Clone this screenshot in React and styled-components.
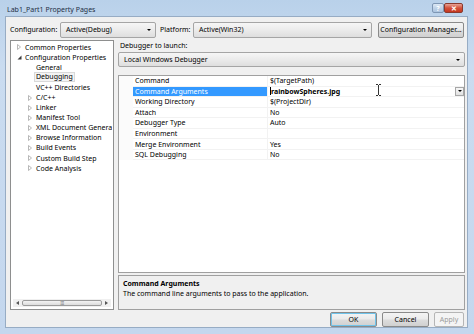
import React from 'react'
import styled, { createGlobalStyle } from 'styled-components'

const Global = createGlobalStyle`
  html, body { margin: 0; padding: 0; }
  body {
    width: 474px; height: 334px; overflow: hidden;
    font-family: "Segoe UI", "Noto Sans", "Open Sans", sans-serif;
    font-size: 7px; color: #000;
  }
`

const Frame = styled.div`
  width: 474px; height: 334px; box-sizing: border-box;
  display: flex; flex-direction: column;
  padding: 0 6px 6px 5px;
  background: linear-gradient(180deg, #b9d1ea 0%, #cadcf0 20%, #c4d7ee 100%);
`

const TitleBar = styled.div`
  flex: none; height: 16px; display: flex; align-items: center; justify-content: space-between;
  padding-left: 2px; padding-top: 2px; box-sizing: border-box;
  color: #1e2f45;
`

const TitleControls = styled.div`
  display: flex; align-self: flex-start; margin-top: 1px; margin-right: 5px;
`

const CaptionBtn = styled.div`
  width: ${p => p.$w}px; height: 10px; box-sizing: border-box;
  border: 1px solid ${p => p.$close ? '#8a3a2e' : '#7f97b4'};
  border-radius: 2px;
  background: ${p => p.$close
    ? 'linear-gradient(#e7a497, #d4513b 50%, #c4361f)'
    : 'linear-gradient(#dce8f5, #bfd2e8 50%, #adc4df)'};
  display: flex; align-items: center; justify-content: center;
  color: #fff; font-size: 7px; font-weight: bold; line-height: 1;
`

const Client = styled.div`
  flex: none; height: 312px; box-sizing: border-box;
  background: #f0f0f0; border: 1px solid #97acc4;
  display: flex; flex-direction: column;
  padding: 4px 2px 0 4px;
`

const TopRow = styled.div`
  flex: none; display: flex; align-items: center; height: 17px;
`

const Label = styled.span`
  width: ${p => p.$w}px; margin-left: ${p => p.$ml || 0}px; white-space: nowrap;
`

const Combo = styled.div`
  flex: none; width: ${p => p.$w ? `${p.$w}px` : 'auto'}; height: ${p => p.$h || 16}px; box-sizing: border-box;
  border: 1px solid #a5a5a5; border-radius: 2px;
  background: linear-gradient(#f6f6f6, #ebebeb 50%, #dedede);
  display: flex; align-items: center; justify-content: space-between;
  padding: 0 4px 0 5px;
  margin-left: ${p => p.$ml || 0}px;
  margin-top: ${p => p.$mt || 0}px;
`

const Arrow = styled.span`
  width: 0; height: 0;
  border-left: 2px solid transparent; border-right: 2px solid transparent;
  border-top: 2px solid #000;
`

const Button = styled.div`
  flex: none; width: ${p => p.$w}px; height: ${p => p.$h || 16}px; box-sizing: border-box;
  border: 1px solid #8a8a8a; border-radius: 2px;
  background: linear-gradient(#f4f4f4, #ebebeb 45%, #dcdcdc 55%, #d0d0d0);
  display: flex; align-items: center; justify-content: center;
  margin-left: ${p => p.$ml || 0}px;
  color: ${p => p.$disabled ? '#9a9a9a' : '#000'};
  ${p => p.$disabled && 'border-color: #b5b5b5; background: #f4f4f4;'}
  ${p => p.$default && 'box-shadow: inset 0 0 0 1px #6fc3ea;'}
`

const Main = styled.div`
  flex: none; display: flex; margin-top: 2px; gap: 4px;
`

const Tree = styled.div`
  flex: none; width: 104px; height: 270px; box-sizing: border-box;
  background: #fff; border: 1px solid #8e8f8f;
  display: flex; flex-direction: column;
  padding: 1px 1px 2px 1px;
`

const TreeList = styled.div`
  flex: 1; overflow: hidden;
`

const TreeItem = styled.div`
  height: 10.1px; display: flex; align-items: center; white-space: nowrap;
  padding-left: ${p => p.$level * 11 + 5}px;
`

const Expander = styled.span`
  flex: none; width: 8px; display: inline-flex; justify-content: flex-start; align-items: center;
`

const ItemText = styled.span`
  flex: none;
  ${p => p.$selected && `
    border: 1px solid #d9d9d9; background: #f4f4f4; margin-left: -2px; padding: 0 1px; line-height: 8px;
  `}
`

const HScroll = styled.div`
  flex: none; height: 8px; margin: 0 1px; display: flex; align-items: center;
  background: #f0f0f0;
`

const ScrollArrow = styled.div`
  width: 9px; display: flex; justify-content: center;
`

const Thumb = styled.div`
  flex: 1; height: 6px; box-sizing: border-box;
  border: 1px solid #9b9b9b; border-radius: 2px;
  background: linear-gradient(#f3f3f3, #dcdcdc);
  display: flex; align-items: center; justify-content: center;
  font-size: 5px; color: #888; letter-spacing: -0.5px;
`

const Right = styled.div`
  flex: 1; display: flex; flex-direction: column;
`

const SmallLabel = styled.div`
  flex: none; height: 10px; display: flex; align-items: center; padding-left: 2px;
`

const Grid = styled.div`
  flex: none; margin-top: 8px; height: 198px; box-sizing: border-box;
  border: 1px solid #a0a0a0; background: #fff;
  position: relative;
`

const Row = styled.div`
  height: 10.55px; display: grid; grid-template-columns: 14px 135px 1fr;
`

const Gutter = styled.div`
  background: #fbfbfb;
`

const NameCell = styled.div`
  display: flex; align-items: center; padding-left: 2px;
  border-bottom: 1px solid #f2f2f2; border-right: 1px solid #f2f2f2;
  ${p => p.$selected && 'background: #3399ff; color: #fff;'}
`

const ValueCell = styled.div`
  display: flex; align-items: center; padding-left: 2px; position: relative;
  border-bottom: 1px solid #f2f2f2;
  font-weight: ${p => p.$bold ? 'bold' : 'normal'};
`

const Caret = styled.span`
  width: 1px; height: 8px; background: #000;
`

const DropBtn = styled.div`
  position: absolute; right: 0; top: 0; width: 9px; height: 9px; box-sizing: border-box;
  border: 1px solid #a7a7a7; background: linear-gradient(#f7f7f7, #e1e1e1);
  display: flex; align-items: center; justify-content: center;
`

const IBeam = styled.svg`
  position: absolute; left: 256px; top: 8px;
`

const Desc = styled.div`
  flex: none; margin-top: 2px; height: 35px; box-sizing: border-box;
  border: 1px solid #a0a0a0; background: #f0f0f0;
  padding: 3px 4px;
  line-height: 10px;
`

const DescTitle = styled.div`
  font-weight: bold;
`

const Footer = styled.div`
  flex: none; display: flex; justify-content: flex-end; margin-top: 2px; padding-right: 1px;
`

const tree = [
  { level: 0, text: 'Common Properties', exp: 'closed' },
  { level: 0, text: 'Configuration Properties', exp: 'open' },
  { level: 1, text: 'General' },
  { level: 1, text: 'Debugging', selected: true },
  { level: 1, text: 'VC++ Directories' },
  { level: 1, text: 'C/C++', exp: 'closed' },
  { level: 1, text: 'Linker', exp: 'closed' },
  { level: 1, text: 'Manifest Tool', exp: 'closed' },
  { level: 1, text: 'XML Document Generator', exp: 'closed' },
  { level: 1, text: 'Browse Information', exp: 'closed' },
  { level: 1, text: 'Build Events', exp: 'closed' },
  { level: 1, text: 'Custom Build Step', exp: 'closed' },
  { level: 1, text: 'Code Analysis', exp: 'closed' },
]

const props = [
  ['Command', '$(TargetPath)'],
  ['Command Arguments', 'rainbowSpheres.jpg', true],
  ['Working Directory', '$(ProjectDir)'],
  ['Attach', 'No'],
  ['Debugger Type', 'Auto'],
  ['Environment', ''],
  ['Merge Environment', 'Yes'],
  ['SQL Debugging', 'No'],
]

const ExpIcon = ({ type }) => {
  if (type === 'open') {
    return (
      <svg width="5" height="5" viewBox="0 0 5 5"><path d="M4.5 0.5 L4.5 4.5 L0.5 4.5 Z" fill="#3c3c3c" /></svg>
    )
  }
  if (type === 'closed') {
    return (
      <svg width="4" height="6" viewBox="0 0 4 6"><path d="M0.5 0.5 L3.5 3 L0.5 5.5 Z" fill="none" stroke="#a6a6a6" strokeWidth="0.8" /></svg>
    )
  }
  return null
}

export default function App() {
  return (
    <Frame>
      <Global />
      <TitleBar>
        <span>Lab1_Part1 Property Pages</span>
        <TitleControls>
          <CaptionBtn $w={12}>?</CaptionBtn>
          <CaptionBtn $w={19} $close>✕</CaptionBtn>
        </TitleControls>
      </TitleBar>
      <Client>
        <TopRow>
          <Label $w={50}>Configuration:</Label>
          <Combo $w={96}><span>Active(Debug)</span><Arrow /></Combo>
          <Label $w={33} $ml={4}>Platform:</Label>
          <Combo $w={179}><span>Active(Win32)</span><Arrow /></Combo>
          <Button $w={86} $ml={6}>Configuration Manager...</Button>
        </TopRow>
        <Main>
          <Tree>
            <TreeList>
              {tree.map(t => (
                <TreeItem key={t.text} $level={t.level}>
                  <Expander><ExpIcon type={t.exp} /></Expander>
                  <ItemText $selected={t.selected}>{t.text}</ItemText>
                </TreeItem>
              ))}
            </TreeList>
            <HScroll>
              <ScrollArrow><svg width="3" height="4" viewBox="0 0 3 4"><path d="M3 0 L0 2 L3 4 Z" fill="#555" /></svg></ScrollArrow>
              <Thumb>III</Thumb>
              <ScrollArrow><svg width="3" height="4" viewBox="0 0 3 4"><path d="M0 0 L3 2 L0 4 Z" fill="#555" /></svg></ScrollArrow>
            </HScroll>
          </Tree>
          <Right>
            <SmallLabel>Debugger to launch:</SmallLabel>
            <Combo $h={15} $mt={2}><span>Local Windows Debugger</span><Arrow /></Combo>
            <Grid>
              {props.map(([name, value, sel]) => (
                <Row key={name}>
                  <Gutter />
                  <NameCell $selected={sel}>{name}</NameCell>
                  <ValueCell $bold={sel}>
                    {sel && <Caret />}
                    {value}
                    {sel && <DropBtn><Arrow /></DropBtn>}
                  </ValueCell>
                </Row>
              ))}
              <IBeam width="7" height="12" viewBox="0 0 7 12">
                <path d="M1 0.5 H3 M4 0.5 H6 M3.5 1 V11 M1 11.5 H3 M4 11.5 H6" stroke="#333" strokeWidth="1" fill="none" />
              </IBeam>
            </Grid>
            <Desc>
              <DescTitle>Command Arguments</DescTitle>
              <div>The command line arguments to pass to the application.</div>
            </Desc>
          </Right>
        </Main>
        <Footer>
          <Button $w={47} $h={15} $default>OK</Button>
          <Button $w={47} $h={15} $ml={5}>Cancel</Button>
          <Button $w={30} $h={15} $ml={5} $disabled>Apply</Button>
        </Footer>
      </Client>
    </Frame>
  )
}
